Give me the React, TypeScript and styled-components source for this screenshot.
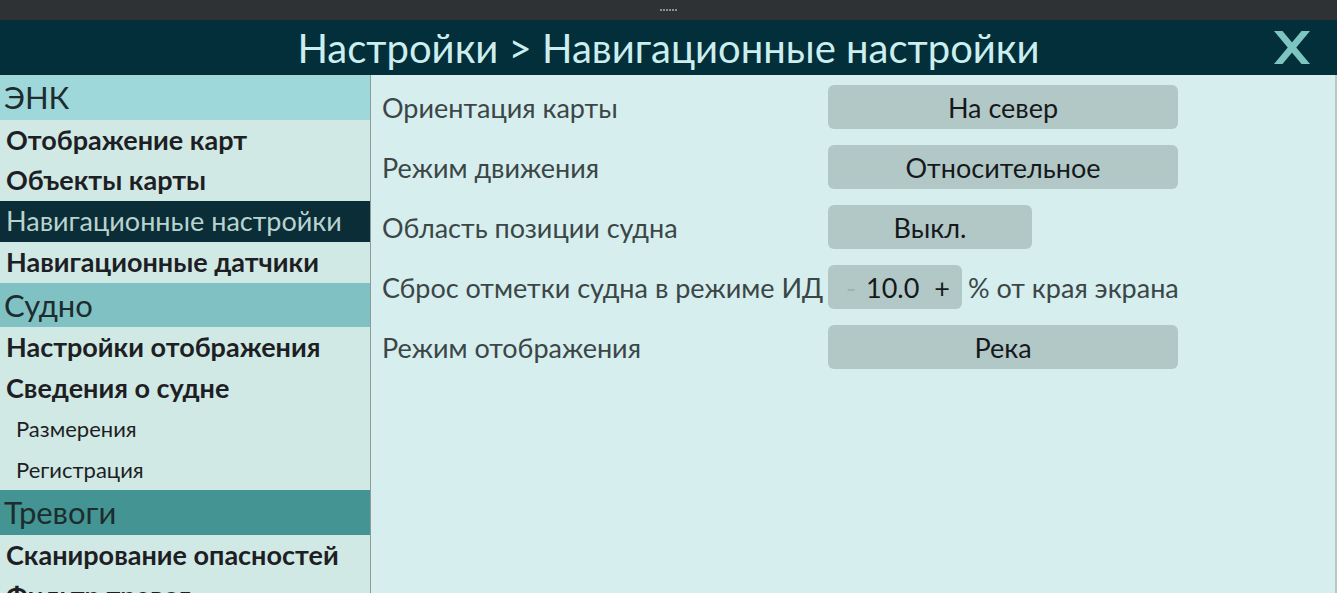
import styled, { createGlobalStyle } from "styled-components";

const GlobalStyle = createGlobalStyle`
  html, body {
    margin: 0;
    padding: 0;
    height: 100%;
    overflow: hidden;
  }
  body {
    font-family: Lato, "Noto Sans", sans-serif;
  }
  #root {
    height: 100%;
  }
`;

const Wrapper = styled.div`
  display: flex;
  flex-direction: column;
  height: 100vh;
  background: #d6eeee;
`;

const Handle = styled.div`
  height: 20px;
  flex: none;
  background: #2e3235;
  display: flex;
  justify-content: center;
  align-items: center;
  gap: 1px;
  span {
    width: 2px;
    height: 2px;
    background: #8a8f92;
  }
`;

const Header = styled.div`
  height: 55px;
  flex: none;
  background: #022f39;
  display: flex;
  align-items: center;
  justify-content: center;
  position: relative;
`;

const Title = styled.h1`
  margin: 0;
  font-weight: 400;
  font-size: 40px;
  color: #cdeeee;
`;

const Close = styled.button`
  position: absolute;
  right: 27px;
  top: 11px;
  border: none;
  background: none;
  padding: 0;
  width: 36px;
  height: 33px;
  cursor: pointer;
  svg {
    display: block;
  }
`;

const Body = styled.div`
  flex: 1;
  display: flex;
  min-height: 0;
`;

const Sidebar = styled.div`
  width: 370px;
  flex: none;
  background: #d1e9e5;
  border-right: 1px solid #8e9b9b;
  overflow: hidden;
`;

const Section = styled.div<{ bg: string }>`
  height: 44.5px;
  background: ${(p) => p.bg};
  color: #1d2c2e;
  font-size: 31px;
  line-height: 44px;
  padding-left: 4px;
  white-space: nowrap;
`;

const Item = styled.div<{ active?: boolean; sub?: boolean }>`
  height: 40.8px;
  line-height: 40px;
  padding-left: ${(p) => (p.sub ? 16 : 6)}px;
  font-size: ${(p) => (p.sub ? 22 : 27)}px;
  font-weight: ${(p) => (p.sub || p.active ? 400 : 700)};
  white-space: nowrap;
  background: ${(p) => (p.active ? "#0a2d37" : "transparent")};
  color: ${(p) => (p.active ? "#b8d3ce" : "#1d1f24")};
`;

const Content = styled.div`
  flex: 1;
  padding: 10px 0 0 11px;
  display: flex;
  flex-direction: column;
  gap: 16px;
  border-right: 2px solid #b8c8c8;
`;

const Row = styled.div`
  display: flex;
  align-items: center;
  height: 44px;
`;

const Label = styled.div`
  width: 446px;
  flex: none;
  font-size: 27px;
  color: #3b4647;
  white-space: nowrap;
`;

const Select = styled.button<{ w: number }>`
  width: ${(p) => p.w}px;
  height: 44px;
  border: none;
  border-radius: 6px;
  background: #b2c8c6;
  font-family: Lato, "Noto Sans", sans-serif;
  font-size: 27px;
  color: #15191c;
  padding: 0;
`;

const Stepper = styled.div`
  width: 134px;
  height: 44px;
  flex: none;
  border-radius: 6px;
  background: #b2c8c6;
  display: flex;
  align-items: center;
  font-size: 27px;
  color: #15191c;
  span.minus {
    color: #9fb4b2;
    margin-left: 18px;
    width: 20px;
  }
  span.value {
    margin-left: 0;
  }
  span.plus {
    margin-left: 15px;
  }
`;

const Unit = styled.div`
  margin-left: 6px;
  font-size: 27px;
  color: #3b4647;
  white-space: nowrap;
`;

export default function App() {
  return (
    <Wrapper>
      <GlobalStyle />
      <Handle>
        {[0, 1, 2, 3, 4, 5].map((i) => (
          <span key={i} />
        ))}
      </Handle>
      <Header>
        <Title>Настройки &gt; Навигационные настройки</Title>
        <Close aria-label="close">
          <svg width="36" height="33" viewBox="0 0 36 33">
            <polygon points="0,0 8.5,0 36,33 27.5,33" fill="#7cc5c0" />
            <polygon points="27.5,0 36,0 8.5,33 0,33" fill="#7cc5c0" />
          </svg>
        </Close>
      </Header>
      <Body>
        <Sidebar>
          <Section bg="#9fd8da">ЭНК</Section>
          <Item>Отображение карт</Item>
          <Item>Объекты карты</Item>
          <Item active>Навигационные настройки</Item>
          <Item>Навигационные датчики</Item>
          <Section bg="#80c2c3">Судно</Section>
          <Item>Настройки отображения</Item>
          <Item>Сведения о судне</Item>
          <Item sub>Размерения</Item>
          <Item sub>Регистрация</Item>
          <Section bg="#439492">Тревоги</Section>
          <Item>Сканирование опасностей</Item>
          <Item>Фильтр тревог</Item>
        </Sidebar>
        <Content>
          <Row>
            <Label>Ориентация карты</Label>
            <Select w={350}>На север</Select>
          </Row>
          <Row>
            <Label>Режим движения</Label>
            <Select w={350}>Относительное</Select>
          </Row>
          <Row>
            <Label>Область позиции судна</Label>
            <Select w={204}>Выкл.</Select>
          </Row>
          <Row>
            <Label>Сброс отметки судна в режиме ИД</Label>
            <Stepper>
              <span className="minus">-</span>
              <span className="value">10.0</span>
              <span className="plus">+</span>
            </Stepper>
            <Unit>% от края экрана</Unit>
          </Row>
          <Row>
            <Label>Режим отображения</Label>
            <Select w={350}>Река</Select>
          </Row>
        </Content>
      </Body>
    </Wrapper>
  );
}
